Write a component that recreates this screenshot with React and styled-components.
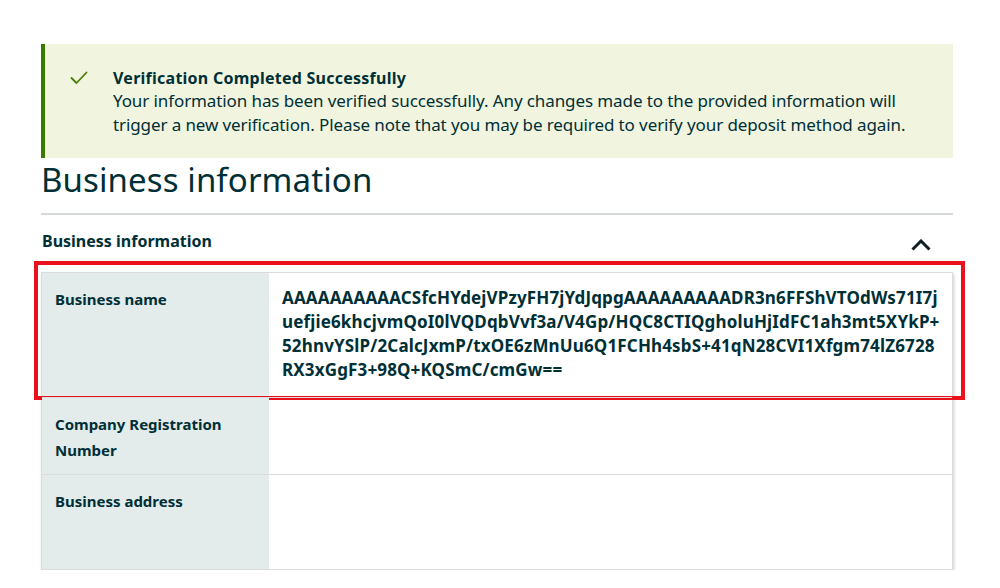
import React from 'react';
import styled, { createGlobalStyle } from 'styled-components';

const GlobalStyle = createGlobalStyle`
	html, body {
		margin: 0;
		padding: 0;
		background: #fff;
	}
	body {
		font-family: 'Noto Sans', 'Open Sans', Arial, sans-serif;
		color: #002f36;
	}
`;

const businessName = [
	'AAAAAAAAAACSfcHYdejVPzyFH7jYdJqpgAAAAAAAAADR3n6FFShVTOdWs71I7j',
	'uefjie6khcjvmQoI0lVQDqbVvf3a/V4Gp/HQC8CTIQgholuHjIdFC1ah3mt5XYkP+',
	'52hnvYSlP/2CalcJxmP/txOE6zMnUu6Q1FCHh4sbS+41qN28CVI1Xfgm74lZ6728',
	'RX3xGgF3+98Q+KQSmC/cmGw==',
];

const rows = [
	{ label: ['Business name'], value: businessName, highlight: true },
	{ label: ['Company Registration', 'Number'], value: [] },
	{ label: ['Business address'], value: [], tall: true },
];

const App = () => {
	return (
		<Page>
			<GlobalStyle />
			<Alert>
				<CheckIcon viewBox='0 0 18 14' aria-hidden='true'>
					<polyline points='1.5,7 6.5,12 16.5,1.5' />
				</CheckIcon>
				<AlertBody>
					<AlertTitle>Verification Completed Successfully</AlertTitle>
					<AlertText>
						Your information has been verified successfully. Any changes made to the provided information will
						trigger a new verification. Please note that you may be required to verify your deposit method again.
					</AlertText>
				</AlertBody>
			</Alert>

			<Heading>Business information</Heading>

			<Section>
				<SectionHeader>
					<SectionTitle>Business information</SectionTitle>
					<Chevron viewBox='0 0 20 12' aria-hidden='true'>
						<polyline points='1.5,10.5 10,2 18.5,10.5' />
					</Chevron>
				</SectionHeader>

				<Table>
					{rows.map((row) => (
						<Row key={row.label[0]} $tall={row.tall}>
							<Label>
								{row.label.map((l) => (
									<span key={l}>{l}</span>
								))}
							</Label>
							<Value>
								{row.value.map((v) => (
									<span key={v}>{v}</span>
								))}
							</Value>
							{row.highlight && <Highlight />}
						</Row>
					))}
				</Table>
			</Section>
		</Page>
	);
};

const Page = styled.main`
	width: 912px;
	padding: 44px 0 0 41px;
`;

const Alert = styled.div`
	display: flex;
	align-items: flex-start;
	background-color: #f1f5e0;
	border-left: 4px solid #3b7a00;
	padding: 23px 20px 21px 25px;
`;

const CheckIcon = styled.svg`
	width: 18px;
	height: 14px;
	margin-top: 4px;
	margin-right: 25px;
	flex-shrink: 0;
	fill: none;
	stroke: #4a7c06;
	stroke-width: 1.8;
	stroke-linecap: round;
	stroke-linejoin: round;
`;

const AlertBody = styled.div`
	display: flex;
	flex-direction: column;
`;

const AlertTitle = styled.h4`
	margin: 0;
	font-size: 16px;
	font-weight: 700;
	line-height: 22px;
	letter-spacing: 0.25px;
`;

const AlertText = styled.p`
	margin: 0;
	font-size: 17px;
	line-height: 24px;
	letter-spacing: -0.1px;
`;

const Heading = styled.h1`
	margin: 0 0 11px;
	font-size: 33px;
	font-weight: 400;
	line-height: 44px;
	letter-spacing: 0.1px;
`;

const Section = styled.section`
	border-top: 2px solid #d5d9d9;
`;

const SectionHeader = styled.div`
	display: flex;
	justify-content: space-between;
	align-items: flex-start;
	padding: 14px 22px 0 1px;
	height: 43px;
`;

const SectionTitle = styled.h3`
	margin: 0;
	font-size: 16px;
	font-weight: 700;
	line-height: 24px;
`;

const Chevron = styled.svg`
	width: 20px;
	height: 12px;
	margin-top: 10px;
	fill: none;
	stroke: #0f1f24;
	stroke-width: 3;
	stroke-linecap: butt;
	stroke-linejoin: miter;
`;

const Table = styled.div`
	display: flex;
	flex-direction: column;
	border: 1px solid #dcdcdc;
	box-shadow: 1px 2px 3px rgba(0, 0, 0, 0.2);
`;

const Row = styled.div`
	position: relative;
	display: grid;
	grid-template-columns: 227px 1fr;
	min-height: ${({ $tall }) => ($tall ? '94px' : 'auto')};
	& + & {
		border-top: 1px solid #dcdcdc;
	}
`;

const Label = styled.div`
	display: flex;
	flex-direction: column;
	background-color: #e3ebeb;
	padding: 13px 14px 11px 13px;
	font-size: 15px;
	font-weight: 700;
	line-height: 26px;
	span {
		display: block;
	}
`;

const Value = styled.div`
	display: flex;
	flex-direction: column;
	padding: 13px 14px 15px 13px;
	font-size: 17px;
	font-weight: 700;
	line-height: 24px;
	letter-spacing: 0.15px;
	span {
		display: block;
		white-space: nowrap;
	}
`;

const Highlight = styled.div`
	position: absolute;
	top: -12px;
	left: -8px;
	right: -13px;
	bottom: -3px;
	border: 4px solid #e8111c;
	pointer-events: none;
`;

export default App;
